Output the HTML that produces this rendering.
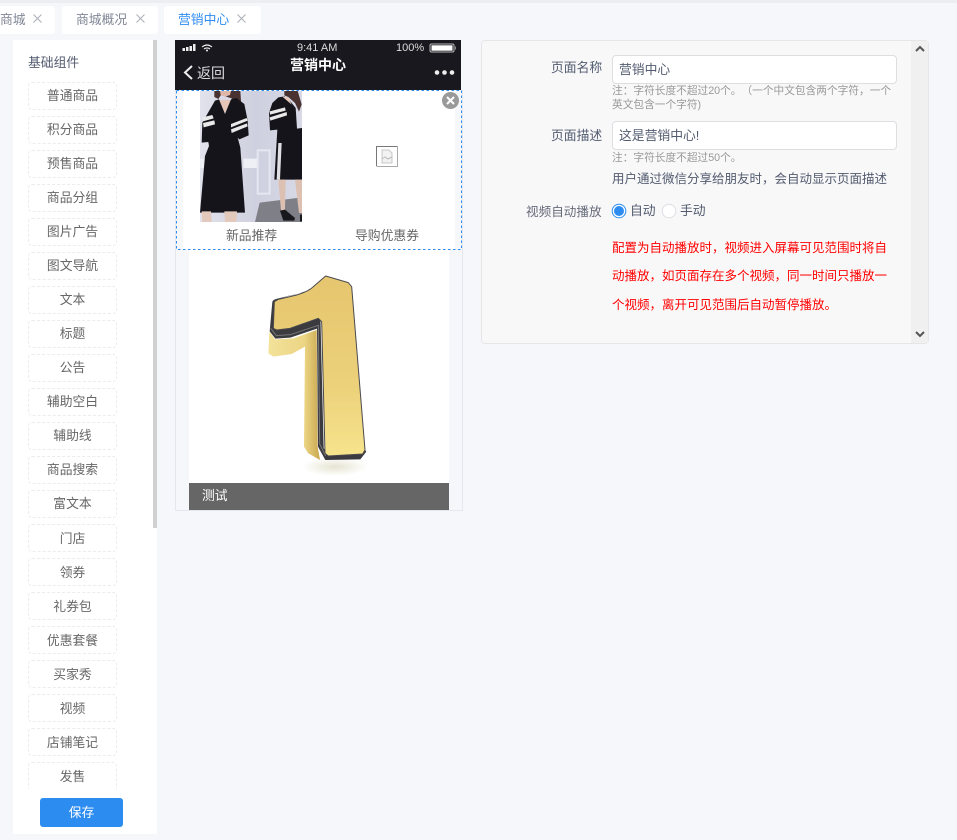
<!DOCTYPE html>
<html lang="zh">
<head>
<meta charset="utf-8">
<style>
html,body{margin:0;padding:0;width:957px;height:840px;overflow:hidden;background:#f5f7fa;font-family:"Liberation Sans","Noto Sans CJK SC",sans-serif;font-size:12.8px;color:#515a6e;text-spacing-trim:space-all}
.a{position:absolute;white-space:nowrap}
.tab{position:absolute;top:6px;height:28px;background:#fff;border-radius:3px;line-height:28px;color:#808695}
.x{position:absolute;top:8px;width:9px;height:9px}
.item{position:absolute;left:28px;width:87px;height:26px;border:1px dashed #ececec;border-radius:4px;line-height:26px;text-align:center;color:#666;background:#fff}
.low{line-height:28px}
.inp{position:absolute;left:612px;width:283px;height:27px;background:#fff;border:1px solid #dcdee2;border-radius:4px;line-height:27px;padding-left:0;color:#515a6e}
.inp span{margin-left:6px}
.hint{font-size:10.7px;color:#999;line-height:13px}
.red{font-size:12.5px;color:#f00;left:612px}
</style>
</head>
<body>
<div class="a" style="left:0;top:0;width:957px;height:3px;background:#eceef2"></div>

<div class="tab" style="left:-10px;width:65px"><span class="a" style="left:10px">商城</span><svg class="x" style="left:43px" viewBox="0 0 9 9"><path d="M.5.5l8 8M8.500.5l-8 8" stroke="#aaaeb6" fill="none"/></svg></div>
<div class="tab" style="left:62px;width:96px"><span class="a" style="left:14px">商城概况</span><svg class="x" style="left:74px" viewBox="0 0 9 9"><path d="M.5.5l8 8M8.500.5l-8 8" stroke="#aaaeb6" fill="none"/></svg></div>
<div class="tab" style="left:164px;width:97px;color:#2d8cf0"><span class="a" style="left:14px">营销中心</span><svg class="x" style="left:73px" viewBox="0 0 9 9"><path d="M.5.5l8 8M8.500.5l-8 8" stroke="#aaaeb6" fill="none"/></svg></div>

<!-- sidebar -->
<div class="a" style="left:13px;top:40px;width:144px;height:794px;background:#fff"></div>
<div class="a" style="left:153px;top:40px;width:4px;height:488px;background:#d0d0d0"></div>
<div class="a" style="left:28px;top:54px;line-height:18px;color:#515a6e">基础组件</div>
<div class="item" style="top:82px">普通商品</div>
<div class="item" style="top:116px">积分商品</div>
<div class="item" style="top:150px">预售商品</div>
<div class="item" style="top:184px">商品分组</div>
<div class="item" style="top:218px">图片广告</div>
<div class="item" style="top:252px">图文导航</div>
<div class="item" style="top:286px">文本</div>
<div class="item" style="top:320px">标题</div>
<div class="item" style="top:354px">公告</div>
<div class="item" style="top:388px">辅助空白</div>
<div class="item" style="top:422px">辅助线</div>
<div class="item" style="top:456px">商品搜索</div>
<div class="item" style="top:490px">富文本</div>
<div class="item low" style="top:524px">门店</div>
<div class="item low" style="top:558px">领券</div>
<div class="item low" style="top:592px">礼券包</div>
<div class="item low" style="top:626px">优惠套餐</div>
<div class="item low" style="top:660px">买家秀</div>
<div class="item low" style="top:694px">视频</div>
<div class="item low" style="top:728px">店铺笔记</div>
<div class="a" style="left:13px;top:762px;width:140px;height:27px;overflow:hidden"><div class="item low" style="left:15px;top:0;height:30px">发售</div></div>
<div class="a" style="left:40px;top:798px;width:83px;height:29px;background:#2d8cf0;border-radius:3px;color:#fff;text-align:center;line-height:29px">保存</div>

<!-- phone -->
<div class="a" style="left:175px;top:90px;width:286px;height:420px;border:1px solid #e4e7ed;border-top:0;background:#f5f7fa"></div>
<div class="a" style="left:175px;top:40px;width:286px;height:50px;background:#1a181f"></div>
<svg class="a" style="left:175px;top:40px" width="286" height="50" viewBox="0 0 286 50">
<rect x="7.500" y="8" width="2.500" height="3" fill="#eee"/><rect x="11" y="7" width="2.500" height="4" fill="#eee"/><rect x="14.500" y="6" width="2.500" height="5" fill="#eee"/><rect x="18" y="4" width="2.500" height="7" fill="#eee"/>
<path d="M27 7q5-4 10 0M29 9q3-2.200 6 0" stroke="#eee" stroke-width="1.100" fill="none"/><circle cx="32" cy="10.500" r="1" fill="#eee"/>
<path d="M17 26l-7 6.500 7 6.500" stroke="#eee" stroke-width="2" fill="none"/>
<rect x="255" y="4" width="24" height="8" rx="1.500" fill="none" stroke="#bbb"/><rect x="256.500" y="5.300" width="21" height="5.400" fill="#fff"/><rect x="280" y="6.500" width="1" height="3" fill="#888"/>
<circle cx="262" cy="32.500" r="2.300" fill="#eee"/><circle cx="269.500" cy="32.500" r="2.300" fill="#eee"/><circle cx="277" cy="32.500" r="2.300" fill="#eee"/>
</svg>
<div class="a" style="left:297px;top:41px;font-size:11px;line-height:14px;color:#ddd">9:41 AM</div>
<div class="a" style="left:396px;top:41px;font-size:11px;line-height:14px;color:#ddd">100%</div>
<div class="a" style="left:197px;top:64px;line-height:18px;font-size:14px;color:#ddd">返回</div>
<div class="a" style="left:290px;top:55px;line-height:20px;font-size:14px;color:#fff;font-weight:bold">营销中心</div>

<div class="a" style="left:183px;top:90px;width:272px;height:160px;background:#fff"></div>
<svg class="a" style="left:200px;top:91px;overflow:hidden" width="102" height="131" viewBox="15 9 306 393">
<defs><linearGradient id="bg" x1="0" y1="0" x2="1" y2="0"><stop offset="0" stop-color="#e2e2ec"/><stop offset=".55" stop-color="#cfd0df"/><stop offset="1" stop-color="#d8d9e6"/></linearGradient></defs>
<g style="filter:blur(.5px)">
<rect x="15" y="9" width="306" height="393" fill="url(#bg)"/>
<path d="M145 212h45v28h-45zM15 212h20v28H15z" fill="#eef0f5"/>
<rect x="188" y="187" width="36" height="130" fill="none" stroke="#e6e7f0" stroke-width="6"/>
<path d="M180 402l14-58 127-16v74z" fill="#7f7f87"/>
<path d="M58 9h78l2 30-4 52-14-30-10-30-32-10-8 12-12-6z" fill="#4a3230"/>
<path d="M75 9h33l-3 12-14 5-14-5z" fill="#dfb7a8"/>
<path d="M72 36l36 0-18 40z" fill="#e6c6b8"/>
<path d="M60 38l12-4 18 44 18-44 16-4 24 18 10 50 3 44-28 12-5-5 8 30 14 195H15l15-170 12-30-2-12-20 2 2-60z" fill="#14141a"/>
<path d="M22 88l30-7 4 10-32 9zM24 105l34-8 2 12-34 9zM108 108l47-18 3 8-50 20zM108 124l48-18 2 9-48 20z" fill="#e9e9ea"/>
<path d="M20 370h28l2 32H22zM88 370h38l-2 32H90z" fill="#e3c9bb"/>
<path d="M250 28l18-3 14 10 20 25 4 62 15-2v155h-83l9-150-22 2-3-52 10-30z" fill="#14141a"/>
<path d="M268 9h40l12 40-8 22-12-26-20-18-12-5z" fill="#4a3230"/>
<path d="M262 26l18 2 10 22z" fill="#e6c6b8"/>
<path d="M224 70l46-12 2 10-47 12zM224 88l51-16 1 10-50 16z" fill="#e9e9ea"/>
<path d="M250 165l10 0-5 110h-10z" fill="#dfdfe4"/>
<path d="M250 275h22l-2 92h-12zM300 275h21v100h-9z" fill="#dcc0b2"/>
<path d="M255 368l15-3 30 25-2 8h-33zM315 380h6v20h-6z" fill="#18181c"/>
</g>
</svg>
<div class="a" style="left:226px;top:227px;line-height:18px;color:#666">新品推荐</div>
<div class="a" style="left:355px;top:227px;line-height:18px;color:#666">导购优惠券</div>
<svg class="a" style="left:376px;top:146px" width="22" height="21" viewBox="0 0 22 21">
<path d="M.5 20V.500H21.500" fill="none" stroke="#777"/><path d="M21.500.500V20.500H.500" fill="none" stroke="#aaa"/>
<path d="M6 4h7l3 3v10H6z" fill="#f2f2f2" stroke="#c8c8c8"/><path d="M6 13l3-2 3 2 4-2" fill="none" stroke="#bbb"/>
</svg>
<svg class="a" style="left:176px;top:90px" width="286" height="160" viewBox="0 0 286 160"><rect x=".5" y=".5" width="285" height="159" fill="none" stroke="#2d8cf0" stroke-dasharray="2.500 2.500"/></svg>
<svg class="a" style="left:441px;top:91px" width="19" height="19" viewBox="0 0 19 19"><circle cx="9.500" cy="9.500" r="8.500" fill="#999"/><path d="M6 6l7 7M13 6l-7 7" stroke="#fff" stroke-width="2"/></svg>

<!-- number image -->
<div class="a" style="left:189px;top:250px;width:260px;height:233px;background:#fff"></div>
<svg class="a" style="left:189px;top:250px;overflow:hidden" width="260" height="233" viewBox="27 0 780 699">
<defs>
<linearGradient id="g1" x1="0" y1="0" x2="0" y2="1"><stop offset="0" stop-color="#e6c66f"/><stop offset=".6" stop-color="#ecd07a"/><stop offset="1" stop-color="#f6e48c"/></linearGradient>
<linearGradient id="g2" x1="0" y1="0" x2="1" y2="0"><stop offset="0" stop-color="#f3e29a"/><stop offset=".7" stop-color="#ecd584"/><stop offset="1" stop-color="#c9a650"/></linearGradient>
<radialGradient id="sh"><stop offset="0" stop-color="#e6e4d2"/><stop offset="1" stop-color="#fff"/></radialGradient>
</defs>
<g style="filter:blur(.4px)">
<ellipse cx="465" cy="650" rx="100" ry="28" fill="url(#sh)"/>
<path d="M268 245l-3 65 15 10 55-8 40-22-3 300 13 20 35 20-7-40-3-350-70 25-55 3z" fill="url(#g2)"/>
<path d="M437 78q-30 40-90 55l-55 13q-14 3-15 10l-8 88 17 22 45-3 80-27 3 354 22 40 105-2 18-23-8-10-110 10-10-10-10-400-85 28-25 2 3-85 55-12 55-30z" fill="#3a3a3f"/>
<path d="M272 235l17 22 42-3 84-28 4 356 18 36" fill="none" stroke="#777" stroke-width="3"/>
<path d="M437 78l68 20 10 12 40 490-7 12-103 6-10-8-10-395-10-10-85 30-40 5-10-5 3-80 12-7 55-13q35-10 50-25z" fill="url(#g1)" stroke="#4a4a4e" stroke-width="3" stroke-linejoin="round"/>
</g>
</svg>
<div class="a" style="left:189px;top:483px;width:260px;height:27px;background:#666;color:#fff;line-height:25px"><span style="margin-left:13px">测试</span></div>

<!-- right panel -->
<div class="a" style="left:481px;top:40px;width:446px;height:302px;background:#f8f8f9;border:1px solid #e6e6e6;border-radius:4px"></div>
<div class="a" style="left:911px;top:41px;width:17px;height:302px;background:#f0f0f0"></div>
<svg class="a" style="left:911px;top:41px" width="17" height="302" viewBox="0 0 17 302"><path d="M5 10l4-4 4 4" stroke="#555" stroke-width="2" fill="none"/><path d="M5 291l4 4 4-4" stroke="#555" stroke-width="2" fill="none"/></svg>

<div class="a" style="left:551px;top:59px;line-height:18px">页面名称</div>
<div class="inp" style="top:55px"><span>营销中心</span></div>
<div class="a hint" style="left:612px;top:85px">注：字符长度不超过20个。（一个中文包含两个字符，一个</div>
<div class="a hint" style="left:612px;top:99px">英文包含一个字符)</div>
<div class="a" style="left:551px;top:127px;line-height:18px">页面描述</div>
<div class="inp" style="top:121px"><span>这是营销中心!</span></div>
<div class="a hint" style="left:612px;top:152px">注：字符长度不超过50个。</div>
<div class="a" style="left:612px;top:170px;line-height:18px;font-size:12.5px">用户通过微信分享给朋友时，会自动显示页面描述</div>
<div class="a" style="left:526px;top:203px;line-height:18px;color:#666b7a;font-size:12.6px">视频自动播放</div>
<svg class="a" style="left:611px;top:203px" width="68" height="16" viewBox="0 0 68 16"><circle cx="8" cy="8" r="6.800" fill="#fff" stroke="#2d8cf0"/><circle cx="8" cy="8" r="5" fill="#2d8cf0"/><circle cx="58" cy="8" r="6.800" fill="#fff" stroke="#dcdee2"/></svg>
<div class="a" style="left:630px;top:202px;line-height:18px">自动</div>
<div class="a" style="left:680px;top:202px;line-height:18px">手动</div>
<div class="a red" style="top:239px;line-height:18px">配置为自动播放时，视频进入屏幕可见范围时将自</div>
<div class="a red" style="top:267px;line-height:18px">动播放，如页面存在多个视频，同一时间只播放一</div>
<div class="a red" style="top:296px;line-height:18px">个视频，离开可见范围后自动暂停播放。</div>
</body>
</html>
